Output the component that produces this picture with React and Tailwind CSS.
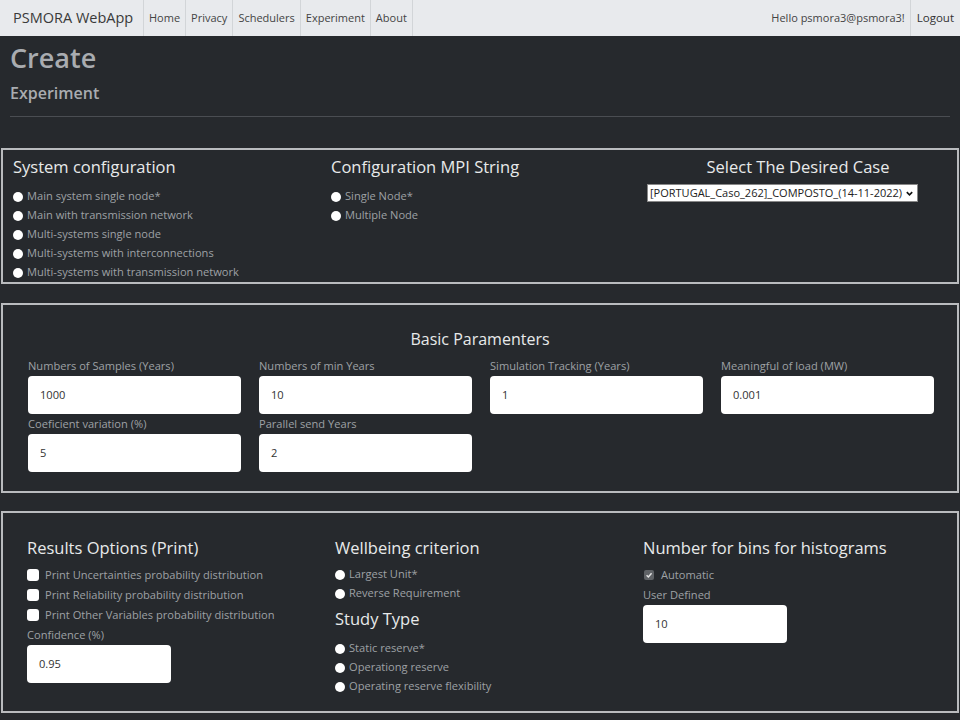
import React from "react";

const font = { fontFamily: '"Open Sans", "Noto Sans", sans-serif' };

function Radio({ label }) {
  return (
    <div className="flex items-center h-[19px]">
      <span className="w-[10px] h-[10px] rounded-full bg-white mr-[4px] shrink-0" />
      <span className="text-[11.1px] text-[#9ea1a5] whitespace-nowrap">{label}</span>
    </div>
  );
}

function Check({ label }) {
  return (
    <div className="flex items-center h-[20px]">
      <span className="w-[12px] h-[12px] rounded-[3px] bg-white mr-[6px] shrink-0" />
      <span className="text-[11.1px] text-[#9ea1a5] whitespace-nowrap">{label}</span>
    </div>
  );
}

function Field({ label, value, w = "w-[213px]" }) {
  return (
    <div className={`${w} flex flex-col`}>
      <div className="h-[20px] flex items-center text-[11.1px] text-[#9ea1a5] whitespace-nowrap">{label}</div>
      <div className="h-[38px] bg-white rounded-[4px] flex items-center pl-[12px] text-[11.1px] text-[#333]">
        {value}
      </div>
    </div>
  );
}

export default function App() {
  return (
    <div style={font} className="w-[960px] h-[720px] bg-[#26292d] overflow-hidden">
      {/* Navbar */}
      <div className="h-[36px] bg-[#e8eaed] flex items-stretch">
        <div className="pl-[13px] flex items-center text-[14.5px] text-[#3a3a3a] w-[143px] whitespace-nowrap">PSMORA WebApp</div>
        <div className="flex items-stretch text-[11px] text-[#444]">
          {["Home", "Privacy", "Schedulers", "Experiment", "About"].map((t, i) => (
            <div key={t} className={`flex items-center px-[5px] border-l border-[#d2d5d8] ${i === 4 ? "border-r" : ""}`}>{t}</div>
          ))}
        </div>
        <div className="flex-1" />
        <div className="flex items-center pr-[5px] text-[11px] text-[#444] whitespace-nowrap">Hello psmora3@psmora3!</div>
        <div className="flex items-center px-[6px] border-l border-[#d2d5d8] text-[11.5px] text-[#333]">Logout</div>
      </div>

      <div className="px-[10px] pt-[4px]">
        <div className="text-[27px] font-semibold text-[#a9acb0] leading-[36px]">Create</div>
        <div className="text-[16px] font-semibold text-[#a9acb0] leading-[24px] mt-[5px]">Experiment</div>
        <div className="h-px bg-[#4a4d52] mt-[11px]" />
      </div>

      {/* Box 1 */}
      <div className="mt-[31px] mx-[1px] border-2 border-[#b9bbbe] h-[136px] grid grid-cols-3">
        <div className="px-[10px] pt-[4px]">
          <div className="text-[16.5px] text-[#e8e9ea] leading-[26px] mb-[7px]">System configuration</div>
          <Radio label="Main system single node*" />
          <Radio label="Main with transmission network" />
          <Radio label="Multi-systems single node" />
          <Radio label="Multi-systems with interconnections" />
          <Radio label="Multi-systems with transmission network" />
        </div>
        <div className="px-[10px] pt-[4px]">
          <div className="text-[16.5px] text-[#e8e9ea] leading-[26px] mb-[7px]">Configuration MPI String</div>
          <Radio label="Single Node*" />
          <Radio label="Multiple Node" />
        </div>
        <div className="px-[8px] pt-[4px] flex flex-col items-center">
          <div className="text-[16.5px] text-[#e8e9ea] leading-[26px] mb-[4px]">Select The Desired Case</div>
          <div className="self-start h-[18px] bg-white border border-[#888] flex items-center pl-[2px] pr-[3px] text-[11px] text-[#222] whitespace-nowrap">
            [PORTUGAL_Caso_262]_COMPOSTO_(14-11-2022)
            <svg width="9" height="9" viewBox="0 0 10 10" className="ml-[3px]">
              <path d="M2 3.5 L5 6.5 L8 3.5" stroke="#111" strokeWidth="1.8" fill="none" />
            </svg>
          </div>
        </div>
      </div>

      {/* Box 2 */}
      <div className="mt-[19px] mx-[1px] border-2 border-[#b9bbbe] h-[190px] flex flex-col">
        <div className="text-center text-[16px] text-[#e8e9ea] leading-[24px] mt-[22px]">Basic Paramenters</div>
        <div className="ml-[25px] mt-[5px] flex gap-x-[18px]">
          <Field label="Numbers of Samples (Years)" value="1000" />
          <Field label="Numbers of min Years" value="10" />
          <Field label="Simulation Tracking (Years)" value="1" />
          <Field label="Meaningful of load (MW)" value="0.001" />
        </div>
        <div className="ml-[25px] flex gap-x-[18px]">
          <Field label="Coeficient variation (%)" value="5" />
          <Field label="Parallel send Years" value="2" />
        </div>
      </div>

      {/* Box 3 */}
      <div className="mt-[18px] mx-[1px] border-2 border-[#b9bbbe] h-[202px] flex pl-[24px] pt-[22px]">
        <div className="w-[308px]">
          <div className="text-[16.5px] text-[#e8e9ea] leading-[26px] mb-[4px]">Results Options (Print)</div>
          <Check label="Print Uncertainties probability distribution" />
          <Check label="Print Reliability probability distribution" />
          <Check label="Print Other Variables probability distribution" />
          <Field label="Confidence (%)" value="0.95" w="w-[144px]" />
        </div>
        <div className="w-[308px]">
          <div className="text-[16.5px] text-[#e8e9ea] leading-[26px] mb-[4px]">Wellbeing criterion</div>
          <Radio label="Largest Unit*" />
          <Radio label="Reverse Requirement" />
          <div className="text-[16.5px] text-[#e8e9ea] leading-[26px] mt-[3px] mb-[7px]">Study Type</div>
          <Radio label="Static reserve*" />
          <Radio label="Operationg reserve" />
          <Radio label="Operating reserve flexibility" />
        </div>
        <div className="w-[308px]">
          <div className="text-[16.5px] text-[#e8e9ea] leading-[26px] mb-[4px]">Number for bins for histograms</div>
          <div className="flex items-center h-[20px]">
            <span className="w-[10px] h-[10px] rounded-[2px] bg-[#5f6266] mr-[7px] ml-[1px] flex items-center justify-center">
              <svg width="8" height="8" viewBox="0 0 10 10"><path d="M2 5.2 L4.2 7.4 L8.2 2.8" stroke="#e5e5e5" strokeWidth="1.8" fill="none" /></svg>
            </span>
            <span className="text-[11.1px] text-[#9ea1a5]">Automatic</span>
          </div>
          <Field label="User Defined" value="10" w="w-[144px]" />
        </div>
      </div>
    </div>
  );
}
